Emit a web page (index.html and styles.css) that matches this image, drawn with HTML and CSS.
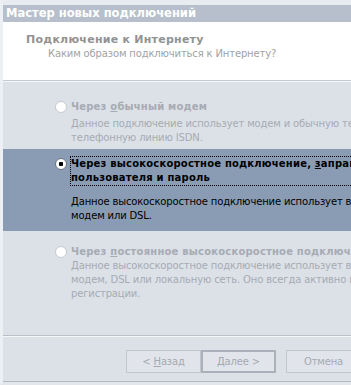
FILE: index.html
```html
<!DOCTYPE html>
<html lang="ru">
<head>
    <meta charset="UTF-8">
    <meta name="viewport" content="width=device-width, initial-scale=1.0">
    <title>Мастер новых подключений</title>
    <link rel="stylesheet" href="styles.css">
</head>
<body>
    <div class="window">
        <div class="titlebar">Мастер новых подключений</div>

        <div class="header">
            <div class="header-title">Подключение к Интернету</div>
            <div class="header-sub">Каким образом подключиться к Интернету?</div>
        </div>

        <div class="body">
            <div class="option option-first disabled">
                <div class="option-label">
                    <span class="radio"></span>
                    <span class="label-text">Через <u>о</u>бычный модем</span>
                </div>
                <div class="option-desc">Данное подключение использует модем и обычную телефонную линию или<br>телефонную линию ISDN.</div>
            </div>

            <div class="option option-second selected">
                <div class="option-label">
                    <span class="radio checked"></span>
                    <span class="label-text focus">Через высокоскоростное подключение, <u>з</u>апрашивающее имя<br>пользователя и пароль</span>
                </div>
                <div class="option-desc">Данное высокоскоростное подключение использует вероятно кабельный<br>модем или DSL.</div>
            </div>

            <div class="option option-third disabled">
                <div class="option-label">
                    <span class="radio"></span>
                    <span class="label-text">Через <u>п</u>остоянное высокоскоростное подключение</span>
                </div>
                <div class="option-desc">Данное высокоскоростное подключение использует вероятно кабельный<br>модем, DSL или локальную сеть. Оно всегда активно и не требует<br>регистрации.</div>
            </div>
        </div>

        <div class="footer">
            <div class="buttons">
                <button class="btn">&lt; <u>Н</u>азад</button>
                <button class="btn btn-default"><u>Д</u>алее &gt;</button>
                <button class="btn btn-cancel">Отмена</button>
            </div>
        </div>
    </div>
</body>
</html>
```

FILE: styles.css
```css
body {
    margin: 0;
    width: 351px;
    height: 385px;
    overflow: hidden;
    background: #e8ebf0;
    font-family: "DejaVu Sans", Verdana, sans-serif;
    font-size: 10px;
    letter-spacing: -0.15px;
}

.window {
    width: 520px;
    height: 385px;
    box-sizing: border-box;
    padding-top: 5px;
    border-left: 3px solid #eceff3;
    border-bottom: 3px solid #e3e6eb;
    display: flex;
    flex-direction: column;
}

.titlebar {
    height: 17px;
    line-height: 17px;
    padding-left: 3px;
    background: #b6bfcb;
    color: #fff;
    font-weight: bold;
    font-size: 11.5px;
    letter-spacing: 0;
}

.header {
    height: 59px;
    box-sizing: border-box;
    padding-top: 11px;
    background: #fff;
    border-bottom: 1px solid #c4cad3;
}

.header-title {
    padding-left: 23px;
    line-height: 14px;
    font-weight: bold;
    font-size: 11px;
    letter-spacing: 0.25px;
    color: #929292;
}

.header-sub {
    padding-left: 45px;
    line-height: 14px;
    color: #a2a2a2;
}

.body {
    flex: 1;
    background: #dce1e8;
    border-top: 1px solid #f4f6f8;
    border-bottom: 1px solid #b9c0ca;
}

.option {
    padding-left: 52px;
    white-space: nowrap;
}

.option-first {
    padding-top: 18px;
    padding-bottom: 4px;
}

.option-second {
    padding-top: 8px;
    padding-bottom: 8px;
}

.option-third {
    padding-top: 14px;
}

.option-label {
    display: flex;
    align-items: flex-start;
    gap: 4px;
    line-height: 14px;
    font-weight: bold;
    letter-spacing: 0.2px;
}

.option-desc {
    padding-left: 16px;
    line-height: 14px;
    margin-top: 3px;
}

.option-second .option-desc {
    margin-top: 10px;
}

.option-third .option-desc {
    margin-top: 0;
}

.disabled {
    color: #a6abb3;
}

.selected {
    background: #8a9cb3;
    color: #000;
}

.focus {
    outline: 1px dotted #000;
    outline-offset: 0;
}

.radio {
    width: 10px;
    height: 10px;
    margin-top: 1px;
    flex-shrink: 0;
    border-radius: 50%;
    background: #fff;
    border: 1px solid #c4c9d0;
}

.radio.checked {
    border-color: #6d7684;
    background: radial-gradient(circle, #000 0 2px, #fff 2.5px);
}

.footer {
    height: 46px;
    box-sizing: border-box;
    padding-top: 13px;
    background: #dce1e8;
    border-top: 1px solid #f4f6f8;
    border-bottom: 1px solid #b3b9c2;
}

.buttons {
    display: flex;
    padding-left: 123px;
}

.btn {
    width: 75px;
    height: 23px;
    padding: 0;
    background: #e1e5eb;
    border: 1px solid #c0c6ce;
    color: #a4a9b1;
    font-family: "DejaVu Sans", Verdana, sans-serif;
    font-size: 10px;
    letter-spacing: -0.15px;
}

.btn-default {
    border: 2px solid #aab1bb;
}

.btn-cancel {
    margin-left: 10px;
}
```
